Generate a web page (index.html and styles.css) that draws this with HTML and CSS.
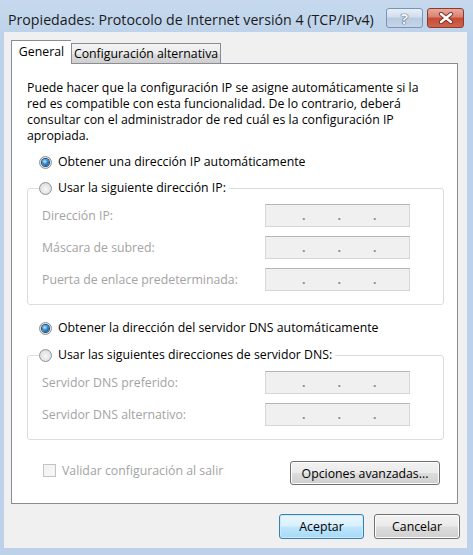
FILE: index.html
```html
<!DOCTYPE html>
<html lang="es">
<head>
<meta charset="UTF-8">
<title>Propiedades: Protocolo de Internet versión 4 (TCP/IPv4)</title>
<link rel="stylesheet" href="styles.css">
</head>
<body>
<div class="window">
    <div class="titlebar">
        <span class="title">Propiedades: Protocolo de Internet versión 4 (TCP/IPv4)</span>
        <div class="caption-buttons">
            <div class="cap help">?</div>
            <div class="cap close">
                <svg width="16" height="12" viewBox="0 0 16 12">
                    <path d="M3 2 L13 10 M13 2 L3 10" stroke="#7a2a22" stroke-width="4.2" stroke-linecap="round"/>
                    <path d="M3 2 L13 10 M13 2 L3 10" stroke="#fff" stroke-width="2.4" stroke-linecap="round"/>
                </svg>
            </div>
        </div>
    </div>

    <div class="client">
        <div class="tabs">
            <div class="tab active">General</div>
            <div class="tab">Configuración alternativa</div>
        </div>

        <div class="tabpanel">
            <p class="intro">
                Puede hacer que la configuración IP se asigne automáticamente si la<br>
                red es compatible con esta funcionalidad. De lo contrario, deberá<br>
                consultar con el administrador de red cuál es la configuración IP<br>
                apropiada.
            </p>

            <div class="option first">
                <span class="radio checked"></span>
                <span>Obtener una dirección IP automáticamente</span>
            </div>

            <fieldset class="group">
                <legend class="option">
                    <span class="radio"></span>
                    <span>Usar la siguiente dirección IP:</span>
                </legend>
                <div class="row">
                    <span class="label">Dirección IP:</span>
                    <div class="ipbox"><span>.</span><span>.</span><span>.</span></div>
                </div>
                <div class="row">
                    <span class="label">Máscara de subred:</span>
                    <div class="ipbox"><span>.</span><span>.</span><span>.</span></div>
                </div>
                <div class="row">
                    <span class="label">Puerta de enlace predeterminada:</span>
                    <div class="ipbox"><span>.</span><span>.</span><span>.</span></div>
                </div>
            </fieldset>

            <div class="option dns-auto">
                <span class="radio checked"></span>
                <span>Obtener la dirección del servidor DNS automáticamente</span>
            </div>

            <fieldset class="group dns">
                <legend class="option">
                    <span class="radio"></span>
                    <span>Usar las siguientes direcciones de servidor DNS:</span>
                </legend>
                <div class="row">
                    <span class="label">Servidor DNS preferido:</span>
                    <div class="ipbox"><span>.</span><span>.</span><span>.</span></div>
                </div>
                <div class="row">
                    <span class="label">Servidor DNS alternativo:</span>
                    <div class="ipbox"><span>.</span><span>.</span><span>.</span></div>
                </div>
            </fieldset>

            <div class="bottom-row">
                <div class="check-line">
                    <span class="checkbox"></span>
                    <span>Validar configuración al salir</span>
                </div>
                <div class="btn wide">Opciones avanzadas...</div>
            </div>
        </div>

        <div class="actions">
            <div class="btn default">Aceptar</div>
            <div class="btn">Cancelar</div>
        </div>
    </div>
</div>
</body>
</html>
```

FILE: styles.css
```css
body {
    margin: 0;
    font-family: "Open Sans", "Noto Sans", sans-serif;
    font-size: 12.3px;
    color: #000;
}
.window {
    width: 473px;
    height: 555px;
    background: linear-gradient(#c6d9ee, #bcd2ea 40px, #bdd2ea);
    display: flex;
    flex-direction: column;
}
.titlebar {
    height: 32px;
    display: flex;
    justify-content: space-between;
    padding: 8px 9px 0 8px;
    box-sizing: border-box;
}
.title {
    font-size: 14.2px;
    line-height: 24px;
    color: #1c1c1c;
}
.caption-buttons {
    display: flex;
    gap: 4px;
}
.cap {
    width: 37px;
    height: 20px;
    box-sizing: border-box;
    border-radius: 3px;
    display: flex;
    align-items: center;
    justify-content: center;
}
.help {
    border: 1px solid #7c93b3;
    background: linear-gradient(#e6eef8, #d2dded 45%, #b9cade 50%, #c6d6ea);
    color: #f4f8fc;
    font-weight: bold;
    font-size: 15px;
    text-shadow: 0 0 1px #4a5d78, 0 0 1px #4a5d78, 0 0 1px #4a5d78;
}
.close {
    border: 1px solid #8c3a30;
    background: linear-gradient(#e9a99c, #d8826f 45%, #c74c37 50%, #d0644c);
}
.client {
    flex: 1;
    margin: 0 6px 7px 4px;
    background: #f0f0f0;
    padding: 8px 7px 0 7px;
}
.tabs {
    display: flex;
    align-items: flex-end;
    height: 23px;
}
.tab {
    height: 20px;
    box-sizing: border-box;
    border: 1px solid #898c95;
    border-bottom: none;
    background: linear-gradient(#f3f3f3, #ebebeb 50%, #dddddd 51%, #cfcfcf);
    line-height: 19px;
    text-align: center;
    width: 150px;
}
.tab.active {
    width: 60px;
    height: 24px;
    margin-bottom: -1px;
    background: #fff;
    line-height: 22px;
    position: relative;
    z-index: 1;
    border-right: none;
}
.tabpanel {
    width: 447px;
    height: 441px;
    box-sizing: border-box;
    border: 1px solid #898c95;
    background: #fff;
    padding: 16px 13px 0 15px;
}
.intro {
    margin: 0;
    line-height: 16px;
    white-space: nowrap;
}
.option {
    display: flex;
    align-items: center;
    gap: 6px;
    height: 16px;
    line-height: 16px;
    margin-left: 12px;
    white-space: nowrap;
}
.option.first {
    margin-top: 10px;
}
.option.dns-auto {
    margin-top: 15px;
}
.radio {
    width: 13px;
    height: 13px;
    box-sizing: border-box;
    border-radius: 50%;
    border: 1px solid #8f9396;
    background: radial-gradient(circle at 50% 55%, #f7f7f7, #e2e2e2 60%, #d0d0d0);
    display: flex;
    align-items: center;
    justify-content: center;
    flex: none;
}
.radio.checked::after {
    content: "";
    width: 7px;
    height: 7px;
    border-radius: 50%;
    background: radial-gradient(circle at 40% 35%, #c4ecff, #3a95d6 40%, #0e4a82 85%);
    box-shadow: 0 0 0 1px #1b4a78;
}
.group {
    margin: 10px 0 0 0;
    width: 417px;
    box-sizing: border-box;
    border: 1px solid #d9dde2;
    border-radius: 3px;
    padding: 8px 33px 13px 14px;
    display: flex;
    flex-direction: column;
    gap: 9px;
}
.group legend {
    padding: 0 3px 0 0;
    margin-left: -3px;
    background: #fff;
}
.group.dns {
    margin-top: 11px;
}
.row {
    display: flex;
    justify-content: space-between;
    align-items: center;
    height: 23px;
}
.label {
    color: #a3a3a3;
}
.ipbox {
    width: 145px;
    height: 23px;
    box-sizing: border-box;
    border: 1px solid #d6d6d6;
    border-top-color: #b5b5b5;
    background: #f0f0f0;
    display: flex;
    padding-left: 36px;
    gap: 32px;
    color: #8a8a8a;
    line-height: 22px;
    font-weight: bold;
}
.bottom-row {
    margin-top: 21px;
    padding: 0 4px 0 16px;
    display: flex;
    justify-content: space-between;
    align-items: flex-start;
}
.check-line {
    display: flex;
    align-items: center;
    gap: 6px;
    height: 16px;
    margin-top: 1px;
    color: #a3a3a3;
}
.checkbox {
    width: 13px;
    height: 13px;
    box-sizing: border-box;
    border: 1px solid #c4c4c4;
    background: linear-gradient(135deg, #f0f0f0, #fafafa);
    box-shadow: inset 0 0 0 1px #f4f4f4;
}
.btn {
    height: 25px;
    box-sizing: border-box;
    border: 1px solid #707070;
    border-radius: 3px;
    background: linear-gradient(#f2f2f2, #ebebeb 48%, #dddddd 52%, #cfcfcf);
    box-shadow: inset 0 0 0 1px #fcfcfc;
    display: flex;
    align-items: center;
    justify-content: center;
    width: 86px;
}
.btn.wide {
    width: 150px;
    height: 24px;
}
.btn.default {
    width: 85px;
    border-color: #3c7fb1;
    background: linear-gradient(#eaf6fd, #d9f0fc 48%, #bee6fd 52%, #a7d9f5);
    box-shadow: inset 0 0 0 1px #c8eafc;
}
.actions {
    display: flex;
    justify-content: flex-end;
    gap: 10px;
    margin-top: 10px;
}
```
